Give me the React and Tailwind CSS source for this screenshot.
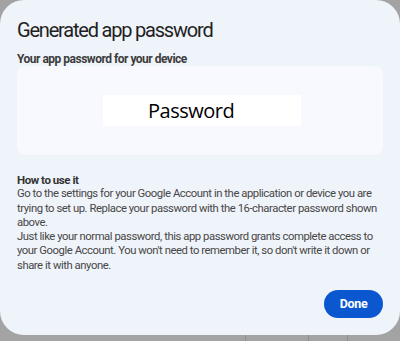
import React from "react";

export default function App() {
  return (
    <div className="w-[400px] h-[341px] bg-[#a3a3a3] relative overflow-hidden" style={{ fontFamily: "Roboto, 'Liberation Sans', sans-serif" }}>
      <div className="absolute left-[245px] top-[335px] w-px h-[6px] bg-[#8e8e8e]" />
      <div className="absolute left-[308px] top-[335px] w-px h-[6px] bg-[#8e8e8e]" />
      <div className="absolute left-[347px] top-[335px] w-px h-[6px] bg-[#8e8e8e]" />
      <div className="w-[400px] h-[335px] bg-[#eff3fa] rounded-[24px] px-[17px] pt-[17px] flex flex-col">
        <h1 className="text-[20px] leading-[26px] text-[#1f1f1f] tracking-[-1.2px]">Generated app password</h1>
        <p className="mt-[8px] text-[12px] leading-[16px] font-bold text-[#3c3c3c] tracking-[-0.5px]">Your app password for your device</p>
        <div className="mt-[-1px] h-[89px] bg-[#f7f9fe] rounded-[8px] flex items-center justify-center">
          <div className="ml-[4px] w-[198px] h-[31px] bg-white flex items-center pl-[45px]">
            <span className="text-[20px] text-black tracking-[-0.5px]" style={{ fontFamily: "'Open Sans', 'Noto Sans', sans-serif" }}>Password</span>
          </div>
        </div>
        <div className="mt-[18px] text-[11.3px] leading-[14.3px] text-[#474747] tracking-[-0.45px]">
          <p className="font-bold text-[#333] text-[11.5px]">How to use it</p>
          <p>Go to the settings for your Google Account in the application or device you are trying to set up. Replace your password with the 16-character password shown above.</p>
          <p>Just like your normal password, this app password grants complete access to your Google Account. You won't need to remember it, so don't write it down or share it with anyone.</p>
        </div>
        <div className="mt-[17px] flex justify-end">
          <button className="w-[59px] h-[28px] rounded-full bg-[#0b57d0] text-white text-[12.5px] font-bold tracking-[-0.3px]">Done</button>
        </div>
      </div>
    </div>
  );
}
